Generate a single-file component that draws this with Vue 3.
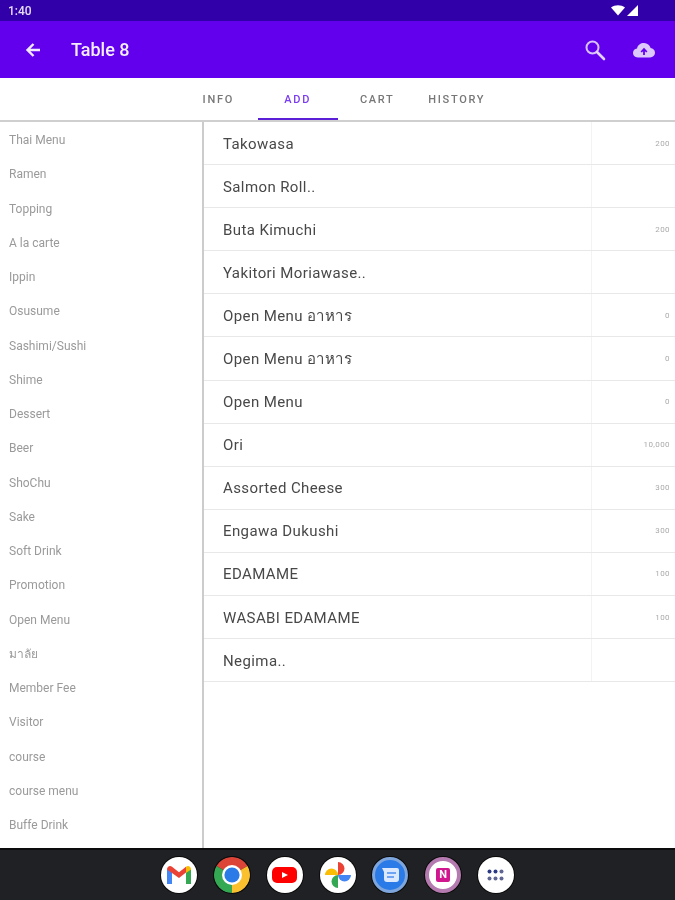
<script setup>
const tabs = [
  { name: 'INFO' },
  { name: 'ADD', active: true },
  { name: 'CART' },
  { name: 'HISTORY' }
]

const categorias = [
  'Thai Menu', 'Ramen', 'Topping', 'A la carte', 'Ippin', 'Osusume', 'Sashimi/Sushi',
  'Shime', 'Dessert', 'Beer', 'ShoChu', 'Sake', 'Soft Drink', 'Promotion', 'Open Menu',
  'มาลัย', 'Member Fee', 'Visitor', 'course', 'course menu', 'Buffe Drink'
]

const productos = [
  { name: 'Takowasa', price: '200' },
  { name: 'Salmon Roll..', price: '' },
  { name: 'Buta Kimuchi', price: '200' },
  { name: 'Yakitori Moriawase..', price: '' },
  { name: 'Open Menu อาหาร', price: '0' },
  { name: 'Open Menu อาหาร', price: '0' },
  { name: 'Open Menu', price: '0' },
  { name: 'Ori', price: '10,000' },
  { name: 'Assorted Cheese', price: '300' },
  { name: 'Engawa Dukushi', price: '300' },
  { name: 'EDAMAME', price: '100' },
  { name: 'WASABI EDAMAME', price: '100' },
  { name: 'Negima..', price: '' }
]
</script>

<template>
  <div class="pantalla">
    <div class="status-bar">
      <span class="hora">1:40</span>
      <div class="status-iconos">
        <svg width="14" height="11" viewBox="0 0 14 11"><path d="M0 2.5 C4 -0.6 10 -0.6 14 2.5 L7 10.5 Z" fill="#fff" /></svg>
        <svg width="11" height="11" viewBox="0 0 11 11"><path d="M11 0 V11 H0 Z" fill="#fff" /></svg>
      </div>
    </div>

    <header class="app-bar">
      <svg class="flecha" width="16" height="16" viewBox="0 0 16 16">
        <path d="M15 8 H3 M8.5 2 L2.5 8 L8.5 14" fill="none" stroke="#f1e8ff" stroke-width="2.4" />
      </svg>
      <h1>Table 8</h1>
      <div class="acciones">
        <svg width="24" height="24" viewBox="0 0 24 24">
          <circle cx="9.5" cy="9.5" r="6" fill="none" stroke="#d9c2fb" stroke-width="2" />
          <path d="M14 14 L21 21" stroke="#e4d4fc" stroke-width="2.6" stroke-linecap="round" />
        </svg>
        <svg width="24" height="20" viewBox="0 0 24 20">
          <path d="M6 17.5 C2.5 17.5 1 15 1 12.8 C1 10.4 2.8 8.6 5 8.4 C5.8 5 8.6 3 12 3 C15.4 3 17.8 5.2 18.6 8 C21 8.2 23 10 23 12.6 C23 15.4 21 17.5 18 17.5 Z" fill="#dcc8fb" />
          <path d="M12 15 V9.5 M9.2 12 L12 9 L14.8 12" fill="none" stroke="#6200ee" stroke-width="1.8" />
        </svg>
      </div>
    </header>

    <nav class="tabs">
      <div
        v-for="tab in tabs"
        :key="tab.name"
        class="tab"
        :class="{ activa: tab.active }"
      >
        {{ tab.name }}
      </div>
    </nav>

    <main class="contenido">
      <aside class="lateral">
        <div v-for="cat in categorias" :key="cat" class="categoria">{{ cat }}</div>
      </aside>
      <section class="lista">
        <div v-for="(prod, i) in productos" :key="i" class="fila">
          <div class="nombre">{{ prod.name }}</div>
          <div class="precio">{{ prod.price }}</div>
        </div>
      </section>
    </main>

    <footer class="dock">
      <div class="app blanco">
        <svg width="24" height="18" viewBox="0 0 24 18">
          <path d="M0 3 V18 H5 V6 Z" fill="#4285f4" />
          <path d="M19 6 V18 H24 V3 Z" fill="#34a853" />
          <path d="M0 3.5 C0 0.5 3 -0.8 5 0.8 L12 6.2 L19 0.8 L19 6.5 L12 12 L0 3.5 Z" fill="#ea4335" />
          <path d="M19 0.8 C21 -0.8 24 0.5 24 3.5 L19 7 Z" fill="#fbbc04" />
        </svg>
      </div>
      <div class="app">
        <svg width="36" height="36" viewBox="0 0 36 36">
          <path d="M18 18 L2.4 9 A18 18 0 0 1 33.6 9 Z" fill="#db4437" />
          <path d="M18 18 L2.4 9 A18 18 0 0 0 18 36 Z" fill="#34a853" />
          <path d="M18 18 L33.6 9 A18 18 0 0 1 18 36 Z" fill="#fbc02d" />
          <circle cx="18" cy="18" r="10" fill="#fff" />
          <circle cx="18" cy="18" r="7.6" fill="#2a7be8" />
        </svg>
      </div>
      <div class="app blanco">
        <svg width="25" height="16" viewBox="0 0 25 16">
          <rect width="25" height="16" rx="5" fill="#f00" />
          <path d="M10 5 L16 8 L10 11 Z" fill="#fff" />
        </svg>
      </div>
      <div class="app blanco">
        <svg width="26" height="26" viewBox="0 0 26 26">
          <path d="M13 13 H0 A6.5 6.5 0 0 1 13 13 Z" fill="#fbbc04" />
          <path d="M13 13 V0 A6.5 6.5 0 0 1 13 13 Z" fill="#ea4335" />
          <path d="M13 13 H26 A6.5 6.5 0 0 1 13 13 Z" fill="#4285f4" />
          <path d="M13 13 V26 A6.5 6.5 0 0 1 13 13 Z" fill="#34a853" />
        </svg>
      </div>
      <div class="app azul">
        <svg width="17" height="14" viewBox="0 0 17 14">
          <path d="M0 0 H15 A2 2 0 0 1 17 2 V11 A3 3 0 0 1 14 14 H5 A3 3 0 0 1 2 11 V4 Z" fill="#dbe8fd" />
          <path d="M5 5 H14 M5 9 H12" stroke="#4b8fee" stroke-width="1.4" />
        </svg>
      </div>
      <div class="app morado">
        <div class="nota">N</div>
      </div>
      <div class="app blanco">
        <svg width="17" height="12" viewBox="0 0 17 12">
          <circle cx="2.5" cy="2.5" r="2" fill="#2c3a85" /><circle cx="8.5" cy="2.5" r="2" fill="#2c3a85" /><circle cx="14.5" cy="2.5" r="2" fill="#5f6694" />
          <circle cx="2.5" cy="9.5" r="2" fill="#5f6694" /><circle cx="8.5" cy="9.5" r="2" fill="#5f6694" /><circle cx="14.5" cy="9.5" r="2" fill="#5f6694" />
        </svg>
      </div>
    </footer>
  </div>
</template>

<style scoped>
.pantalla {
  width: 675px;
  height: 900px;
  display: flex;
  flex-direction: column;
  overflow: hidden;
  background: #fff;
  font-family: Roboto, "Liberation Sans", sans-serif;
  filter: blur(0.5px);
}

.status-bar {
  height: 21px;
  flex-shrink: 0;
  display: flex;
  align-items: center;
  justify-content: space-between;
  padding: 0 37px 0 8px;
  background: #3200a9;
  color: #e6dcf8;
  font-size: 12px;
  font-weight: 500;
}

.status-iconos {
  display: flex;
  align-items: center;
  gap: 2px;
}

.app-bar {
  height: 57px;
  flex-shrink: 0;
  display: flex;
  align-items: center;
  padding: 0 19px 0 25px;
  background: #6200ee;
}

.flecha {
  margin-right: 30px;
}

.app-bar h1 {
  margin: 0;
  color: #f4edff;
  font-size: 18px;
  font-weight: 500;
}

.acciones {
  margin-left: auto;
  display: flex;
  align-items: center;
  gap: 25px;
}

.tabs {
  height: 44px;
  flex-shrink: 0;
  display: flex;
  justify-content: center;
  box-sizing: border-box;
  border-bottom: 2px solid #cfcfcf;
}

.tab {
  width: 79.5px;
  height: 42px;
  box-sizing: border-box;
  display: flex;
  align-items: center;
  justify-content: center;
  padding-top: 1px;
  color: #777;
  font-size: 11px;
  font-weight: 500;
  letter-spacing: 1.7px;
}

.tab.activa {
  color: #7a3cf0;
  padding-top: 3px;
  border-bottom: 2px solid #5a1fd6;
}

.contenido {
  flex: 1;
  min-height: 0;
  display: flex;
}

.lateral {
  width: 204px;
  flex-shrink: 0;
  box-sizing: border-box;
  border-right: 2px solid #cccccc;
  padding-top: 1px;
}

.categoria {
  height: 34.25px;
  padding-left: 9px;
  display: flex;
  align-items: center;
  color: #9a9a9a;
  font-size: 12px;
}

.lista {
  flex: 1;
  min-width: 0;
}

.fila {
  height: 43.1px;
  box-sizing: border-box;
  display: flex;
  border-bottom: 1px solid #e8e8e8;
}

.nombre {
  width: 388px;
  flex-shrink: 0;
  box-sizing: border-box;
  padding: 1px 0 0 19px;
  display: flex;
  align-items: center;
  color: #484848;
  font-size: 15px;
  letter-spacing: 0.4px;
  border-right: 1px solid #f3f3f3;
}

.precio {
  flex: 1;
  padding-right: 5px;
  display: flex;
  align-items: center;
  justify-content: flex-end;
  color: #aaa;
  font-size: 8px;
  letter-spacing: 0.4px;
}

.dock {
  height: 52px;
  flex-shrink: 0;
  display: flex;
  align-items: center;
  justify-content: center;
  gap: 16.8px;
  box-sizing: border-box;
  background: #202124;
  border-top: 2px solid #0c0c0c;
}

.app {
  width: 36px;
  height: 36px;
  border-radius: 50%;
  overflow: hidden;
  display: flex;
  align-items: center;
  justify-content: center;
  flex-shrink: 0;
  box-shadow: 0 0 0 1px #0a0a0a;
}

.blanco {
  background: #fff;
}

.azul {
  background: #2a7be8;
  border: 3px solid #7ea6dc;
  box-sizing: border-box;
}

.morado {
  background: #fff;
  border: 4px solid #b57ab0;
  box-sizing: border-box;
}

.nota {
  width: 14px;
  height: 14px;
  border-radius: 2px;
  background: #d0178f;
  color: #fff;
  font-size: 11px;
  font-weight: 700;
  line-height: 14px;
  text-align: center;
}
</style>
